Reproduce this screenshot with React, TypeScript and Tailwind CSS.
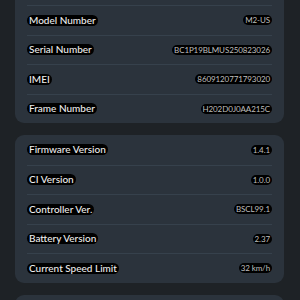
import React from "react";

type Row = { label: string; value: string };

const card1: Row[] = [
  { label: "Model Number", value: "M2-US" },
  { label: "Serial Number", value: "BC1P19BLMUS250823026" },
  { label: "IMEI", value: "8609120771793020" },
  { label: "Frame Number", value: "H202D0J0AA215C" },
];

const card2: Row[] = [
  { label: "Firmware Version", value: "1.4.1" },
  { label: "CI Version", value: "1.0.0" },
  { label: "Controller Ver.", value: "BSCL99.1" },
  { label: "Battery Version", value: "2.37" },
  { label: "Current Speed Limit", value: "32 km/h" },
];

function InfoRow({ row, first }: { row: Row; first: boolean }) {
  return (
    <div
      className={
        "flex h-[29.5px] items-center justify-between " +
        (first ? "" : "border-t border-[#36414c]")
      }
    >
      <span className="rounded-full bg-black px-[2px] text-[10px] leading-[11px] font-medium text-[#ececec]">
        {row.label}
      </span>
      <span className="rounded-full bg-black px-[2px] text-[8px] leading-[10px] tracking-[-0.1px] text-[#bfbfbf]">
        {row.value}
      </span>
    </div>
  );
}

function Card({ rows, className, children }: { rows: Row[]; className?: string; children?: React.ReactNode }) {
  return (
    <div className={"ml-[15px] mr-[16px] rounded-[9px] bg-[#2b333c] px-[12px] " + (className ?? "")}>
      {children}
      {rows.map((r, i) => (
        <InfoRow key={r.label} row={r} first={i === 0 && !children} />
      ))}
    </div>
  );
}

export default function App() {
  return (
    <div
      className="h-[300px] w-[300px] overflow-hidden bg-[#1e2226]"
      style={{ fontFamily: "Lato, 'Noto Sans', sans-serif" }}
    >
      <div className="mt-[-24.5px] flex flex-col gap-[12px]">
        <Card rows={card1} className="rounded-t-none">
          <div className="h-[29.5px]" />
        </Card>
        <Card rows={card2} />
        <div className="ml-[15px] mr-[16px] h-[40px] rounded-[9px] bg-[#2b333c]" />
      </div>
    </div>
  );
}
